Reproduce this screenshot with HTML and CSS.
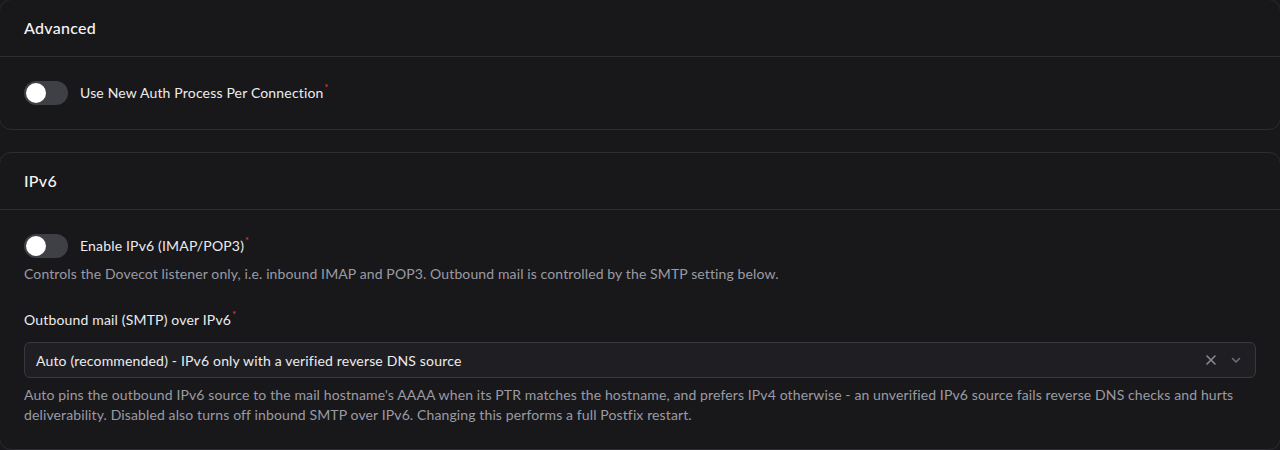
FILE: index.html
```html
<!DOCTYPE html>
<html lang="en">
<head>
    <meta charset="UTF-8">
    <meta name="viewport" content="width=device-width, initial-scale=1.0">
    <title>Mail Settings</title>
    <link rel="stylesheet" href="styles.css">
</head>
<body>
    <div class="page">
        <section class="card">
            <div class="card-header">Advanced</div>
            <div class="card-body">
                <div class="switch-row">
                    <span class="switch"><span class="knob"></span></span>
                    <span class="switch-label">Use New Auth Process Per Connection<sup class="req">*</sup></span>
                </div>
            </div>
        </section>

        <section class="card">
            <div class="card-header">IPv6</div>
            <div class="card-body">
                <div class="field">
                    <div class="switch-row">
                        <span class="switch"><span class="knob"></span></span>
                        <span class="switch-label">Enable IPv6 (IMAP/POP3)<sup class="req">*</sup></span>
                    </div>
                    <p class="hint">Controls the Dovecot listener only, i.e. inbound IMAP and POP3. Outbound mail is controlled by the SMTP setting below.</p>
                </div>

                <div class="field">
                    <label class="field-label">Outbound mail (SMTP) over IPv6<sup class="req">*</sup></label>
                    <div class="select">
                        <span class="select-value">Auto (recommended) - IPv6 only with a verified reverse DNS source</span>
                        <span class="select-icons">
                            <svg class="icon-clear" width="14" height="14" viewBox="0 0 14 14"><path d="M3 3l8 8M11 3l-8 8" stroke="currentColor" stroke-width="1.6" stroke-linecap="round"/></svg>
                            <svg class="icon-chevron" width="14" height="14" viewBox="0 0 14 14"><path d="M3.5 5.5L7 9l3.5-3.5" fill="none" stroke="currentColor" stroke-width="1.5" stroke-linecap="round" stroke-linejoin="round"/></svg>
                        </span>
                    </div>
                    <p class="hint hint-after">Auto pins the outbound IPv6 source to the mail hostname's AAAA when its PTR matches the hostname, and prefers IPv4 otherwise - an unverified IPv6 source fails reverse DNS checks and hurts deliverability. Disabled also turns off inbound SMTP over IPv6. Changing this performs a full Postfix restart.</p>
                </div>
            </div>
        </section>
    </div>
</body>
</html>
```

FILE: styles.css
```css
body {
    margin: 0;
    background-color: #18181b;
    color: #f4f4f5;
    font-family: Lato, "Noto Sans", sans-serif;
    letter-spacing: 0.17px;
    overflow: hidden;
}
.page {
    display: flex;
    flex-direction: column;
    gap: 22px;
    margin: -1px -1px 0;
}
.card {
    border: 1px solid #2d2d31;
    border-radius: 12px;
    background-color: #18181b;
}
.card-header {
    padding: 16px 24px;
    font-size: 16px;
    line-height: 24px;
    font-weight: 500;
    letter-spacing: 0.3px;
    border-bottom: 1px solid #2d2d31;
}
.card-body {
    padding: 24px;
    display: flex;
    flex-direction: column;
    gap: 26px;
}
.field {
    display: flex;
    flex-direction: column;
}
.switch-row {
    display: flex;
    align-items: center;
    gap: 12px;
}
.switch {
    width: 44px;
    height: 24px;
    border-radius: 12px;
    background-color: #3f3f46;
    display: flex;
    align-items: center;
    padding: 0 2px;
    box-sizing: border-box;
}
.knob {
    width: 20px;
    height: 20px;
    border-radius: 50%;
    background-color: #fff;
}
.switch-label,
.field-label {
    font-size: 14px;
    line-height: 20px;
    color: #ececee;
}
.req {
    color: #ef4444;
    font-size: 9px;
    vertical-align: top;
    line-height: 10px;
    margin-left: 1px;
}
.hint {
    margin: 6px 0 0;
    font-size: 14px;
    line-height: 20px;
    letter-spacing: 0.12px;
    color: #9b9ba3;
}
.hint-after {
    margin-top: 7px;
}
.field-label {
    margin-bottom: 12px;
}
.select {
    height: 36px;
    box-sizing: border-box;
    border: 1px solid #38383e;
    border-radius: 6px;
    background-color: #1f1f23;
    display: flex;
    align-items: center;
    padding: 0 12px 0 11px;
    font-size: 14px;
}
.select-value {
    flex: 1;
    color: #ececee;
}
.select-icons {
    display: flex;
    align-items: center;
    gap: 11px;
}
.icon-clear {
    color: #8a8a92;
}
.icon-chevron {
    color: #6b7280;
}
```
